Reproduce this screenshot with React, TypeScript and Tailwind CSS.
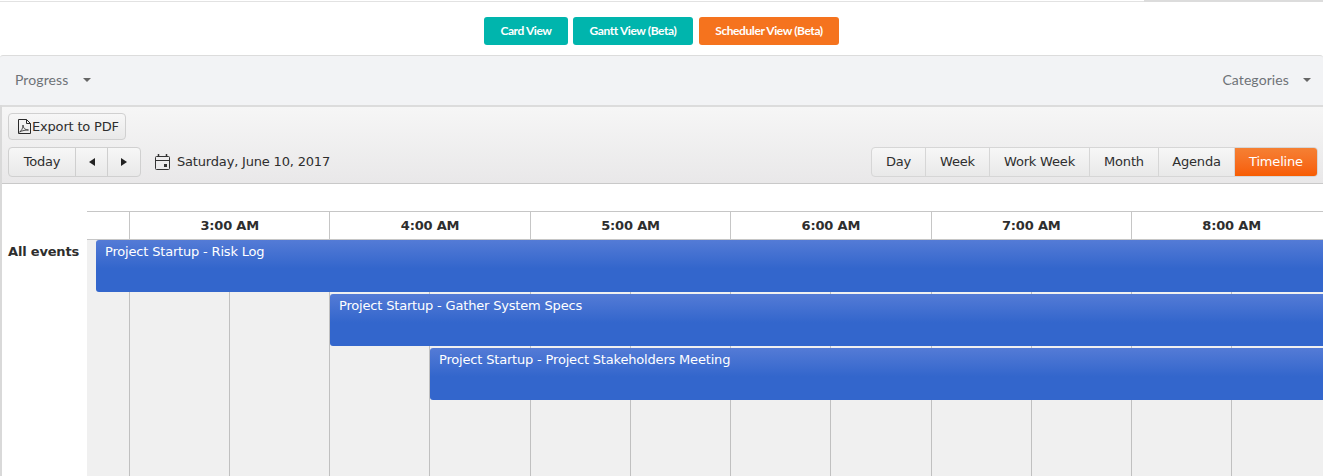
const hours = ["3:00 AM", "4:00 AM", "5:00 AM", "6:00 AM", "7:00 AM", "8:00 AM"];
const slotWidths = ["w-[100px]", "w-[100px]", "w-[100px]", "w-[101px]", "w-[100px]", "w-[100px]", "w-[100px]", "w-[101px]", "w-[100px]", "w-[100px]", "w-[100px]", "w-[101px]"];

const views = [
  { label: "Day", width: "w-[54px]" },
  { label: "Week", width: "w-[64px]" },
  { label: "Work Week", width: "w-[100px]" },
  { label: "Month", width: "w-[69px]" },
  { label: "Agenda", width: "w-[76px]" },
];

const events = [
  { title: "Project Startup - Risk Log", pos: "left-[9px] top-0" },
  { title: "Project Startup - Gather System Specs", pos: "left-[243px] top-[54px]" },
  { title: "Project Startup - Project Stakeholders Meeting", pos: "left-[343px] top-[108px]" },
];

function Caret() {
  return <span className="inline-block w-0 h-0 border-x-[4px] border-x-transparent border-t-[4px] border-t-[#666]" />;
}

function PdfIcon() {
  return (
    <svg width="13" height="15" viewBox="0 0 13 15" fill="none" stroke="#2a2a2a" strokeWidth="1">
      <path d="M.5 .5h8l4 4v10h-12z" />
      <path d="M8.500 .5v4h4" />
      <path d="M1.500 13c2-1 3.500-4 3.500-7 0 3 2 5 5.500 5-3 0-6 .5-9 2z" strokeWidth=".8" />
    </svg>
  );
}

function CalendarIcon() {
  return (
    <svg width="15" height="16" viewBox="0 0 15 16" fill="none" stroke="#333" strokeWidth="1">
      <rect x=".5" y="2.500" width="14" height="13" rx="1" />
      <path d="M.5 6.500h14" />
      <path d="M3.500 0v3M11.500 0v3" strokeWidth="1.500" />
      <rect x="9" y="10" width="3" height="3" fill="#333" stroke="none" />
    </svg>
  );
}

export default function App() {
  return (
    <div className="h-[476px] w-[1323px] overflow-hidden bg-white font-['DejaVu_Sans',sans-serif] text-[13px] tracking-[-0.18px] text-[#2e2e2e]">
      <div className="flex h-[2px]">
        <div className="mt-[1px] flex-1 bg-[#e2e2e2]" />
        <div className="w-[179px] bg-[#dcdcdc]" />
      </div>

      <div className="flex h-[53px] justify-center pt-[15px] font-['Lato',sans-serif] text-[12px] font-bold tracking-[-0.42px] text-white">
        <button className="h-[28px] w-[84px] rounded-[3px] bg-[#00b5ad]">Card View</button>
        <button className="ml-[5px] h-[28px] w-[120px] rounded-[3px] bg-[#00b5ad]">Gantt View (Beta)</button>
        <button className="ml-[6px] h-[28px] w-[140px] rounded-[3px] bg-[#f5731e]">Scheduler View (Beta)</button>
      </div>

      <div className="flex h-[50px] items-center justify-between rounded-t-[3px] border-t border-t-[#dcdcdc] bg-[#f2f3f5] pr-[12px] pb-[2px] pl-[15px] font-['Lato',sans-serif] text-[14px] tracking-[0.1px] text-[#6e7277]">
        <div className="flex items-center gap-[15px]">
          <span>Progress</span>
          <Caret />
        </div>
        <div className="flex items-center gap-[14px]">
          <span>Categories</span>
          <Caret />
        </div>
      </div>

      <div className="border-l-2 border-[#d9d9d9]">
        <div className="h-[79px] border-t-2 border-b border-t-[#dcdcdc] border-b-[#c9c9c9] bg-gradient-to-b from-[#f6f6f6] to-[#e9e8e9] pt-[6px] pr-[5px] pl-[6px]">
          <button className="flex h-[27px] w-[118px] items-center gap-[1px] rounded-[4px] border border-[#d0d0d0] bg-gradient-to-b from-[#f7f7f7] to-[#e9e9e9] pl-[9px]">
            <PdfIcon />
            <span>Export to PDF</span>
          </button>

          <div className="mt-[7px] flex items-center justify-between">
            <div className="flex items-center">
              <div className="flex h-[30px] w-[133px] rounded-[4px] border border-[#d0d0d0] bg-gradient-to-b from-[#f7f7f7] to-[#e9e9e9]">
                <button className="w-[67px] border-r border-[#cfcfcf]">Today</button>
                <button className="flex w-[32px] items-center justify-center border-r border-[#cfcfcf]">
                  <span className="h-0 w-0 border-y-[4px] border-r-[6px] border-y-transparent border-r-[#222]" />
                </button>
                <button className="flex flex-1 items-center justify-center">
                  <span className="h-0 w-0 border-y-[4px] border-l-[6px] border-y-transparent border-l-[#222]" />
                </button>
              </div>
              <div className="ml-[14px] flex items-center gap-[7px]">
                <CalendarIcon />
                <span>Saturday, June 10, 2017</span>
              </div>
            </div>

            <div className="flex h-[30px] overflow-hidden rounded-[4px] border border-[#d6d6d6] bg-gradient-to-b from-[#f7f7f7] to-[#e9e9e9]">
              {views.map((v) => (
                <button key={v.label} className={`${v.width} border-r border-[#d6d6d6]`}>
                  {v.label}
                </button>
              ))}
              <button className="w-[82px] bg-gradient-to-b from-[#f58033] to-[#f75c00] text-white">Timeline</button>
            </div>
          </div>
        </div>

        <div className="flex h-[292px]">
          <div className="w-[85px] shrink-0 pt-[58px] pl-[6px] font-bold">All events</div>
          <div className="flex-1 pt-[27px]">
            <div className="flex h-[29px] border-y border-[#c6c6c6]">
              <div className="w-[42px] shrink-0" />
              {hours.map((h) => (
                <div key={h} className="flex w-[200.4px] shrink-0 items-center justify-center border-l border-[#c6c6c6] font-bold">
                  {h}
                </div>
              ))}
            </div>
            <div className="relative flex h-[236px] overflow-hidden bg-[#f0f0f0]">
              <div className="w-[42px] shrink-0" />
              {slotWidths.map((w, i) => (
                <div key={i} className={`${w} shrink-0 border-l border-[#c0c0c0]`} />
              ))}
              {events.map((e) => (
                <div
                  key={e.title}
                  className={`absolute ${e.pos} right-[-4px] h-[52px] rounded-[3px] bg-[linear-gradient(#547bd6,#3366cc_55%)] pt-[2px] pl-[9px] text-white`}
                >
                  {e.title}
                </div>
              ))}
            </div>
          </div>
        </div>
      </div>
    </div>
  );
}
